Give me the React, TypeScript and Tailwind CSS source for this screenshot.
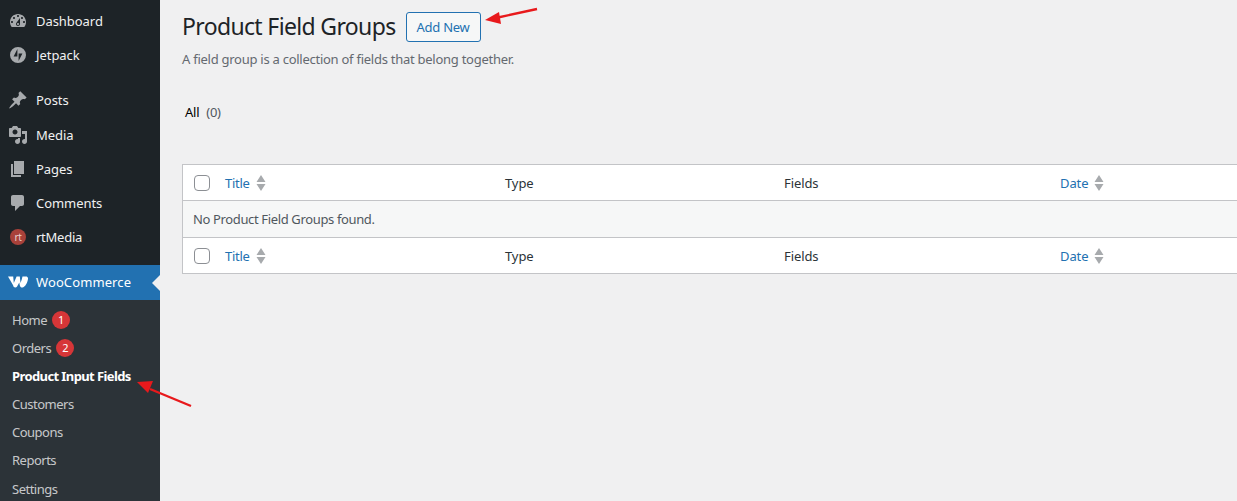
import React from "react";

const D = {
  dash: "M3.76 16h12.48c1.1-1.37 1.76-3.11 1.76-5 0-4.42-3.58-8-8-8s-8 3.58-8 8c0 1.89.66 3.63 1.76 5zM10 4c.55 0 1 .45 1 1s-.45 1-1 1-1-.45-1-1 .45-1 1-1zM6 6c.55 0 1 .45 1 1s-.45 1-1 1-1-.45-1-1 .45-1 1-1zm8 0c.55 0 1 .45 1 1s-.45 1-1 1-1-.45-1-1 .45-1 1-1zm-5.37 5.55L12 7v6c0 1.1-.9 2-2 2s-2-.9-2-2c0-.57.24-1.08.63-1.45zM4 10c.55 0 1 .45 1 1s-.45 1-1 1-1-.45-1-1 .45-1 1-1zm12 0c.55 0 1 .45 1 1s-.45 1-1 1-1-.45-1-1 .45-1 1-1zm-5 3c0-.55-.45-1-1-1s-1 .45-1 1 .45 1 1 1 1-.45 1-1z",
  jet: "M10 2a8 8 0 1 0 0 16 8 8 0 0 0 0-16zM9.400 11.400H5.600L9.400 4zM10.600 16V8.600h3.800z",
  post: "M10.44 3.02l1.82-1.82 6.36 6.35-1.83 1.82c-1.05-.68-2.48-.57-3.41.36l-.75.75c-.92.93-1.04 2.35-.35 3.41l-1.83 1.82-2.41-2.41-2.8 2.79c-.42.42-3.38 2.71-3.8 2.29s1.86-3.39 2.28-3.81l2.79-2.79L4.1 9.36l1.83-1.82c1.05.69 2.48.57 3.41-.36l.75-.75c.93-.92 1.04-2.35.35-3.41z",
  media: "M13 11V4c0-.55-.45-1-1-1h-1.67L9 1H5L3.67 3H2c-.55 0-1 .45-1 1v7c0 .55.45 1 1 1h10c.55 0 1-.45 1-1zM7 4.500c1.38 0 2.500 1.120 2.500 2.500S8.380 9.500 7 9.500 4.500 8.380 4.500 7 5.620 4.500 7 4.500zM14 6h5v10.500c0 1.380-1.120 2.500-2.500 2.500S14 17.880 14 16.500s1.120-2.500 2.500-2.500c.17 0 .34.02.5.05V9h-3V6zm-4 8.050V13h2v3.500c0 1.380-1.120 2.500-2.500 2.500S7 17.880 7 16.500 8.120 14 9.500 14c.17 0 .34.02.5.05z",
  pages: "M6 15V2h10v13H6zm-1 1h8v2H3V5h2v11z",
  comments: "M5 2h9c1.100 0 2 .9 2 2v7c0 1.100-.9 2-2 2h-2l-5 5v-5H5c-1.100 0-2-.9-2-2V4c0-1.100.9-2 2-2z",
};

function Icon({ d }: { d: string }) {
  return (
    <svg viewBox="0 0 20 20" className="h-5 w-5 shrink-0 fill-[#a7aaad]">
      <path fillRule="evenodd" d={d} />
    </svg>
  );
}

function MenuItem({ d, label, className = "" }: { d: string; label: string; className?: string }) {
  return (
    <div className={`flex h-[34px] items-center pl-[8px] tracking-[-0.05px] text-[#f0f0f1] ${className}`}>
      <Icon d={d} />
      <span className="ml-[8px]">{label}</span>
    </div>
  );
}

function Sub({ label, badge, strong, className = "" }: { label: string; badge?: string; strong?: boolean; className?: string }) {
  return (
    <div className={`flex h-[28px] items-center pl-[12px] ${strong ? "font-bold tracking-[-0.6px] text-white" : "tracking-[-0.5px] text-[#f0f0f1cc]"} ${className}`}>
      {label}
      {badge && (
        <span className="ml-[5px] flex h-[18px] w-[18px] items-center justify-center rounded-full bg-[#d63638] text-[11px] text-white">
          {badge}
        </span>
      )}
    </div>
  );
}

function Sort() {
  return (
    <svg viewBox="0 0 10 16" className="ml-[6px] h-4 w-[10px] fill-[#a7aaad]">
      <path d="M5 0l4.500 7h-9zM5 16L.5 9h9z" />
    </svg>
  );
}

function HeadRow({ className = "" }: { className?: string }) {
  return (
    <div className={`grid h-[36px] grid-cols-[322px_279px_276px_1fr] items-center bg-white tracking-[-0.1px] text-[#2c3338] ${className}`}>
      <div className="flex items-center pl-[11px]">
        <span className="h-4 w-4 rounded-[4px] border border-[#8c8f94] bg-white" />
        <span className="ml-[15px] tracking-[-0.26px] text-[#2271b1]">Title</span>
        <Sort />
      </div>
      <div>Type</div>
      <div>Fields</div>
      <div className="flex items-center text-[#2271b1]">
        Date
        <Sort />
      </div>
    </div>
  );
}

export default function App() {
  return (
    <div className="relative flex h-[501px] w-[1237px] overflow-hidden bg-[#f0f0f1] font-['Noto_Sans',sans-serif] text-[13px] leading-[18px] tracking-[-0.26px]">
      <aside className="w-[160px] shrink-0 bg-[#1d2327]">
        <div className="pt-[4px]">
          <MenuItem d={D.dash} label="Dashboard" />
          <MenuItem d={D.jet} label="Jetpack" />
        </div>
        <div className="pt-[11px]">
          <MenuItem d={D.post} label="Posts" />
          <MenuItem d={D.media} label="Media" className="mt-[1px]" />
          <MenuItem d={D.pages} label="Pages" />
          <MenuItem d={D.comments} label="Comments" />
          <div className="flex h-[34px] items-center pl-[8px] text-[#f0f0f1]">
            <span className="flex h-5 w-5 items-center justify-center">
              <span className="flex h-4 w-4 items-center justify-center rounded-full bg-[#a8413a] text-[10px] leading-none text-[#e8cfcd]">rt</span>
            </span>
            <span className="ml-[8px]">rtMedia</span>
          </div>
        </div>
        <div className="relative mt-[11px] flex h-[35px] items-center bg-[#2271b1] pb-[1px] pl-[8px] tracking-[0.1px] text-white">
          <svg viewBox="0 0 20 12" className="h-3 w-5 fill-white">
            <path d="M0 .5h5.200l.6 6.500L8.600.5h3.200l.7 6.500c.9-2.100 1.600-4.300 2-6.500h3.500c1.300 0 2.200 1 2 2.600-.4 3.500-3 8.400-5.600 8.400-1.500 0-2.400-.9-2.700-2.600l-.4-2.400-2.200 3.900c-.5.800-1.100 1.100-1.800 1.100-1.200 0-1.900-.8-2.200-2.200L0 .5z" />
          </svg>
          <span className="ml-[8px]">WooCommerce</span>
          <span className="absolute right-0 top-[10px] h-0 w-0 border-y-[8px] border-r-[8px] border-y-transparent border-r-[#f0f0f1]" />
        </div>
        <div className="bg-[#2c3338] pt-[6px]">
          <Sub label="Home" badge="1" />
          <Sub label="Orders" badge="2" />
          <Sub label="Product Input Fields" strong />
          <Sub label="Customers" />
          <Sub label="Coupons" />
          <Sub label="Reports" />
          <Sub label="Settings" className="mt-[1px]" />
        </div>
      </aside>

      <main className="min-w-0 flex-1 pl-[22px]">
        <div className="flex items-center pt-[12px]">
          <h1 className="pb-[1px] text-[23px] leading-[29px] tracking-[-0.65px] text-[#1d2327]">Product Field Groups</h1>
          <span className="ml-[10px] flex h-[30px] w-[75px] items-center justify-center rounded-[3px] border border-[#2271b1] bg-[#f6f7f7] text-[#2271b1]">
            Add New
          </span>
        </div>
        <p className="mt-[8px] text-[#646970]">A field group is a collection of fields that belong together.</p>
        <div className="mt-[35px] flex items-center pl-[3px]">
          <span className="text-black">All</span>
          <span className="ml-[7px] text-[#50575e]">(0)</span>
        </div>
        <div className="mt-[43px] w-[1120px] border border-[#c3c4c7]">
          <HeadRow className="border-b border-[#c3c4c7]" />
          <div className="flex h-[36px] items-center bg-[#f6f7f7] pl-[10px] tracking-[-0.36px] text-[#50575e]">No Product Field Groups found.</div>
          <HeadRow className="border-t border-[#c3c4c7]" />
        </div>
      </main>

      <svg className="pointer-events-none absolute left-0 top-0" width="1237" height="501" viewBox="0 0 1237 501">
        <path d="M537 9L498 17.500" stroke="#e8191c" strokeWidth="2.400" fill="none" />
        <path d="M485 20l14-8 2 12z" fill="#e8191c" />
        <path d="M191 406L150 389" stroke="#e8191c" strokeWidth="2.400" fill="none" />
        <path d="M137 382l16-1-5 12z" fill="#e8191c" />
      </svg>
    </div>
  );
}
